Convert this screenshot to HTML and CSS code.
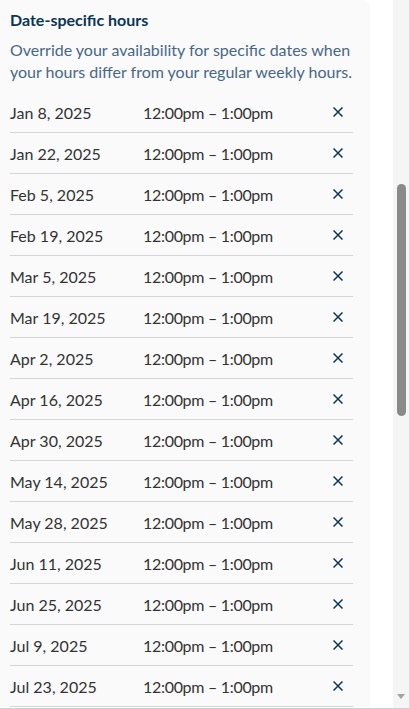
FILE: index.html
```html
<!DOCTYPE html>
<html>
<head>
<meta charset="utf-8">
<link rel="stylesheet" href="styles.css">
</head>
<body>
<div class="frame">
  <div class="content">
    <section class="panel">
      <h2 class="title">Date-specific hours</h2>
      <p class="desc">Override your availability for specific dates when your hours differ from your regular weekly hours.</p>
      <ul class="list">
        <li class="row"><span class="date">Jan 8, 2025</span><span class="time">12:00pm – 1:00pm</span><button class="remove" aria-label="Remove"><svg viewBox="0 0 10 10" width="10" height="10"><path d="M0.5 0.5L9.5 9.5M9.5 0.5L0.5 9.5"/></svg></button></li>
        <li class="row"><span class="date">Jan 22, 2025</span><span class="time">12:00pm – 1:00pm</span><button class="remove" aria-label="Remove"><svg viewBox="0 0 10 10" width="10" height="10"><path d="M0.5 0.5L9.5 9.5M9.5 0.5L0.5 9.5"/></svg></button></li>
        <li class="row"><span class="date">Feb 5, 2025</span><span class="time">12:00pm – 1:00pm</span><button class="remove" aria-label="Remove"><svg viewBox="0 0 10 10" width="10" height="10"><path d="M0.5 0.5L9.5 9.5M9.5 0.5L0.5 9.5"/></svg></button></li>
        <li class="row"><span class="date">Feb 19, 2025</span><span class="time">12:00pm – 1:00pm</span><button class="remove" aria-label="Remove"><svg viewBox="0 0 10 10" width="10" height="10"><path d="M0.5 0.5L9.5 9.5M9.5 0.5L0.5 9.5"/></svg></button></li>
        <li class="row"><span class="date">Mar 5, 2025</span><span class="time">12:00pm – 1:00pm</span><button class="remove" aria-label="Remove"><svg viewBox="0 0 10 10" width="10" height="10"><path d="M0.5 0.5L9.5 9.5M9.5 0.5L0.5 9.5"/></svg></button></li>
        <li class="row"><span class="date">Mar 19, 2025</span><span class="time">12:00pm – 1:00pm</span><button class="remove" aria-label="Remove"><svg viewBox="0 0 10 10" width="10" height="10"><path d="M0.5 0.5L9.5 9.5M9.5 0.5L0.5 9.5"/></svg></button></li>
        <li class="row"><span class="date">Apr 2, 2025</span><span class="time">12:00pm – 1:00pm</span><button class="remove" aria-label="Remove"><svg viewBox="0 0 10 10" width="10" height="10"><path d="M0.5 0.5L9.5 9.5M9.5 0.5L0.5 9.5"/></svg></button></li>
        <li class="row"><span class="date">Apr 16, 2025</span><span class="time">12:00pm – 1:00pm</span><button class="remove" aria-label="Remove"><svg viewBox="0 0 10 10" width="10" height="10"><path d="M0.5 0.5L9.5 9.5M9.5 0.5L0.5 9.5"/></svg></button></li>
        <li class="row"><span class="date">Apr 30, 2025</span><span class="time">12:00pm – 1:00pm</span><button class="remove" aria-label="Remove"><svg viewBox="0 0 10 10" width="10" height="10"><path d="M0.5 0.5L9.5 9.5M9.5 0.5L0.5 9.5"/></svg></button></li>
        <li class="row"><span class="date">May 14, 2025</span><span class="time">12:00pm – 1:00pm</span><button class="remove" aria-label="Remove"><svg viewBox="0 0 10 10" width="10" height="10"><path d="M0.5 0.5L9.5 9.5M9.5 0.5L0.5 9.5"/></svg></button></li>
        <li class="row"><span class="date">May 28, 2025</span><span class="time">12:00pm – 1:00pm</span><button class="remove" aria-label="Remove"><svg viewBox="0 0 10 10" width="10" height="10"><path d="M0.5 0.5L9.5 9.5M9.5 0.5L0.5 9.5"/></svg></button></li>
        <li class="row"><span class="date">Jun 11, 2025</span><span class="time">12:00pm – 1:00pm</span><button class="remove" aria-label="Remove"><svg viewBox="0 0 10 10" width="10" height="10"><path d="M0.5 0.5L9.5 9.5M9.5 0.5L0.5 9.5"/></svg></button></li>
        <li class="row"><span class="date">Jun 25, 2025</span><span class="time">12:00pm – 1:00pm</span><button class="remove" aria-label="Remove"><svg viewBox="0 0 10 10" width="10" height="10"><path d="M0.5 0.5L9.5 9.5M9.5 0.5L0.5 9.5"/></svg></button></li>
        <li class="row"><span class="date">Jul 9, 2025</span><span class="time">12:00pm – 1:00pm</span><button class="remove" aria-label="Remove"><svg viewBox="0 0 10 10" width="10" height="10"><path d="M0.5 0.5L9.5 9.5M9.5 0.5L0.5 9.5"/></svg></button></li>
        <li class="row"><span class="date">Jul 23, 2025</span><span class="time">12:00pm – 1:00pm</span><button class="remove" aria-label="Remove"><svg viewBox="0 0 10 10" width="10" height="10"><path d="M0.5 0.5L9.5 9.5M9.5 0.5L0.5 9.5"/></svg></button></li>
      </ul>
    </section>
  </div>
  <div class="scrollbar">
    <div class="thumb"></div>
    <div class="arrow"></div>
  </div>
</div>
</body>
</html>
```
FILE: styles.css
```css
html, body {
  margin: 0;
  padding: 0;
  background: #ffffff;
}
body {
  width: 410px;
  height: 709px;
  overflow: hidden;
  font-family: Lato, "Noto Sans", sans-serif;
}
.frame {
  display: flex;
  height: 709px;
  box-sizing: border-box;
  border-bottom: 1px solid #cfcfcf;
}
.content {
  width: 393px;
  overflow: hidden;
}
.panel {
  width: 370px;
  box-sizing: border-box;
  background: #fafafa;
  border-top-right-radius: 8px;
  padding: 10px 17px 0 10px;
}
.title {
  margin: 0;
  font-size: 16px;
  line-height: 20px;
  font-weight: 700;
  color: #0b3558;
}
.desc {
  margin: 9px 0 9px;
  font-size: 16px;
  line-height: 22px;
  color: #476788;
}
.list {
  list-style: none;
  margin: 0;
  padding: 0;
}
.row {
  display: flex;
  align-items: center;
  height: 40px;
  border-bottom: 1px solid #d4d4d4;
  font-size: 16px;
  color: #333333;
}
.date {
  width: 133px;
  flex: none;
}
.time {
  flex: 1;
  letter-spacing: -0.3px;
}
.remove {
  border: 0;
  background: none;
  padding: 0;
  margin: 0 10px 0 0;
  width: 10px;
  height: 10px;
  display: flex;
}
.remove svg {
  stroke: #0b3558;
  stroke-width: 1.5;
  fill: none;
}
.scrollbar {
  width: 17px;
  box-sizing: border-box;
  background: #f5f5f5;
  border-right: 1px solid #dcdcdc;
  display: flex;
  flex-direction: column;
  align-items: center;
}
.thumb {
  margin-top: 184px;
  width: 9px;
  height: 232px;
  border-radius: 5px;
  background: #8a8a8a;
}
.arrow {
  margin-top: auto;
  margin-bottom: 9px;
  width: 0;
  height: 0;
  border-left: 4.5px solid transparent;
  border-right: 4.5px solid transparent;
  border-top: 5px solid #a3a3a3;
}
```
